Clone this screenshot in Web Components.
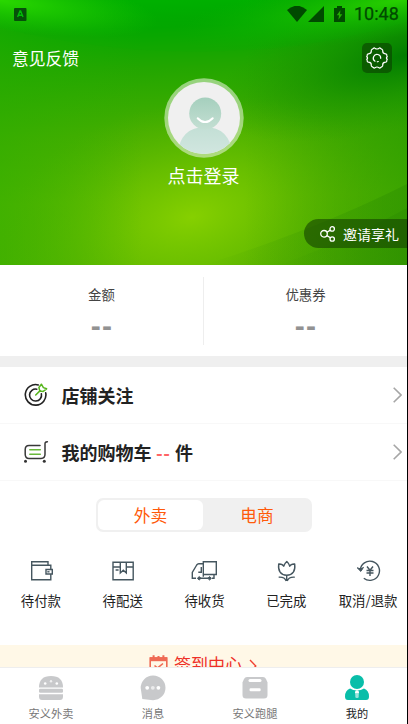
<!DOCTYPE html>
<html lang="zh-CN">
<head>
<meta charset="utf-8">
<title>我的</title>
<style>
html,body{margin:0;padding:0;background:#000}
body{width:408px;height:724px;overflow:hidden;font-family:"Noto Sans CJK SC",sans-serif;color:#222}
</style>
</head>
<body>
<profile-page></profile-page>
<script>
const define=(name,html)=>customElements.define(name,class extends HTMLElement{
  constructor(){
    super();
    this.attachShadow({mode:'open'}).innerHTML=html.replace(/\{(\w+)\}/g,(m,k)=>this.getAttribute(k)||'');
  }
});

const icons={
  gear:[24,24,'<g fill="none" stroke="#fff" stroke-width="1.2" stroke-linejoin="round" stroke-linecap="round"><path d="M8.3 2.5Q9.2 1.5 10 2.2Q12 3.8 14 2.2Q14.8 1.5 15.7 2.5L17.2 3.5Q18 4 17.7 5Q17.5 7.5 20.5 7.8Q22 8 21.8 9.3Q21.7 10.2 22.3 10.7Q20.5 12 22.3 13.3Q21.7 13.8 21.8 14.7Q22 16 20.5 16.2Q17.5 16.5 17.7 19Q18 20 17.2 20.5L15.7 21.5Q14.8 22.5 14 21.8Q12 20.2 10 21.8Q9.2 22.5 8.3 21.5L6.8 20.5Q6 20 6.3 19Q6.5 16.5 3.5 16.2Q2 16 2.2 14.7Q2.3 13.8 1.7 13.3Q3.5 12 1.7 10.7Q2.3 10.2 2.2 9.3Q2 8 3.5 7.8Q6.5 7.5 6.3 5Q6 4 6.8 3.5Z"/><path d="M10 15.2A3.7 3.7 0 1 1 15.7 12.3M12.3 15.8L13.3 15.5"/></g>'],
  share:[16,16,'<g fill="none" stroke="#fff" stroke-width="1.3"><circle cx="4" cy="7.8" r="3.3"/><circle cx="12.2" cy="2.9" r="2.2"/><circle cx="12.2" cy="13" r="2.2"/><path d="M6.9 6.2L10.3 4.1M6.9 9.6L10.4 11.8"/></g>'],
  target:[24,24,'<g fill="none" stroke="#222" stroke-width="1.6" stroke-linecap="round"><path d="M14.3 1.9A10.3 10.3 0 1 0 21.7 9.8"/><path d="M12.8 6.2A6 6 0 1 0 17.4 10.8"/><path stroke="#57b51e" stroke-width="1.5" stroke-linejoin="round" d="M11.7 12L16.2 7.6M17.4 1.2L14.9 4.5L15.8 7.9L19.2 8.4L22.6 5.8L19.4 4.6Z"/></g>'],
  cart:[26,24,'<g fill="none" stroke="#383838" stroke-width="1.5" stroke-linecap="round"><path d="M23.4 1.7C20.6 1.7 21 3.3 21 5.5V14.3Q21 18.4 17 18.4H5Q1.2 18.4 1.2 14.3V9.5Q1.2 5.4 5 5.4H16"/><path stroke="#68b83a" d="M5.8 9.7H16.3M5.8 14.3H16.3"/></g><circle cx="1.5" cy="21.2" r="1.5" fill="#333"/><circle cx="20.3" cy="21.2" r="1.5" fill="#333"/>'],
  wallet:[24,24,'<g fill="none" stroke="#45565f" stroke-width="1.4"><path d="M2.7 6.7V2.7H19V6.2M2.7 6.2H21.8V10M21.8 15.2V20.8H2.7V5.8M17 10.5H23.3V15H17Z"/><path d="M18.3 12.8H20.5"/></g>'],
  package:[24,24,'<g fill="none" stroke="#45565f" stroke-width="1.4"><path d="M2 3.2H22.2V20.8H2ZM2 8H9.3M15.3 8H22.2M9.3 3V14L12.3 11.3L15.3 14V3M4.6 11H7.6"/></g>'],
  truck:[28,24,'<g fill="none" stroke="#45565f" stroke-width="1.4"><path d="M13.3 17.8V2.7H26.3V15.5H13.3M13.3 4.8H8.8Q7.5 4.8 6.7 6L2.3 13.5V19.3H6M10 19.3H18M22 19.3H24V15.5M11.3 8V13.3H8.3"/></g><path d="M9.2 17.6L11 19.3L9.2 21L7.4 19.3ZM19.6 17.6L21.4 19.3L19.6 21L17.8 19.3Z" fill="#45565f" stroke="#45565f"/>'],
  tulip:[24,24,'<g fill="none" stroke="#45565f" stroke-width="1.4" stroke-linejoin="round" transform="translate(.7 0)"><path d="M4 5Q8 4.8 9 7.2Q9.8 4.5 12.1 2.5Q14.4 4.5 15 7.2Q16.2 4.8 20 5Q21.3 15.5 12 16.3Q2.8 15.5 4 5ZM12 16.5V22M4 18.2Q10 17.8 11.5 22M20 18.2Q14 17.8 12.5 22"/></g>'],
  refund:[26,24,'<g transform="translate(1 0)"><g fill="none" stroke="#45565f" stroke-width="1.4"><path d="M4.3 11A9.6 9.6 0 1 1 7.8 19.2"/><path d="M11 7.5L14 11.3L17 7.5M10.5 11.5H17.5M10.5 14H17.5M14 11.3V17"/></g><path d="M1.2 8.8L4.8 12.4L7.5 8.4L4.7 9.9Z" fill="#45565f" stroke="#45565f"/></g>'],
  calendar:[19,19,'<g fill="none" stroke="#ef6a54" stroke-width="1.6"><path d="M1.2 3H17.8V17.8H1.2Z"/><path d="M1 4.2H18" stroke-width="4"/><path d="M4.6 .3V3M9.5 1V3M14.4 .3V3" stroke-width="2"/><path d="M5.5 10.5L8.5 13L14 8.5"/></g>'],
  burger:[24,24,'<g fill="#c8c9cb"><path d="M0 11.5Q0 0 12 0T24 11.5Z"/><rect y="12.8" width="24" height="4" rx="1.2"/><path d="M0 18.3H24V20.5Q24 24 21 24H3Q0 24 0 20.5Z"/></g><g fill="#fff"><circle cx="6.2" cy="7.5" r="1.3"/><circle cx="12" cy="5.2" r="1.2" opacity=".7"/><circle cx="17.8" cy="7.5" r="1.3"/></g>'],
  chat:[26,26,'<path fill="#c8c9cb" d="M.7 13A12.4 12.4 0 1 1 13 25.2L2.3 24Z"/><g fill="#fff"><circle cx="7.2" cy="12.8" r="1.9"/><circle cx="12.8" cy="12.8" r="1.9" opacity=".65"/><circle cx="18.4" cy="12.8" r="1.9"/></g>'],
  box:[26,22,'<path fill="#c8c9cb" d="M5 0H21Q23 0 24 2L25.5 5.5V18Q25.5 21.5 22 21.5H4Q.5 21.5 .5 18V5.5L2 2Q3 0 5 0Z"/><rect x="6.5" y="2" width="13" height="3" rx="1.5" fill="#fff"/><rect x="7.5" y="11.3" width="11.2" height="3" rx="1.2" fill="#fff"/>'],
  user:[24,26,'<g fill="#09bea9"><circle cx="12" cy="7" r="7"/><path d="M5 13.5Q8 15.6 12 15.6T19 13.5Q24 15.3 24 21.5Q24 25 21 25H3Q0 25 0 21.5Q0 15.3 5 13.5Z"/></g><circle cx="12" cy="17.2" r="2" fill="#fff"/><rect x="10.3" y="18" width="3.4" height="5" rx="1.3" fill="#9ce3dc"/>'],
  arrow:[9,16,'<path d="M.7 .8L8 8L.7 15.2" fill="none" stroke="#a6a6a6" stroke-width="1.6"/>'],
  smallarrow:[8,14,'<path d="M1 1L6.8 7L1 13" fill="none" stroke="#f04032" stroke-width="1.4"/>'],
  wifi:[20,16,'<path d="M0 4Q10-4.5 20 4L10 16Z" fill="#004a00"/>'],
  signal:[16,16,'<path d="M16 0V16H0Z" fill="#004a00"/>'],
  battery:[11,16,'<path d="M3 0H8V2H11V16H0V2H3Z" fill="#004a00"/><path d="M6.4 4.2L2.8 9.2H5L4.4 13.7L8.3 8.2H6Z" fill="#25b000"/>'],
  app:[13,13,'<rect width="12.5" height="13" rx="1" fill="#06500a"/><path d="M3.6 9L6 3H6.6L9 9M4.6 7.2H8" fill="none" stroke="#00bd08" stroke-width="1.4"/>']
};
customElements.define('ui-icon',class extends HTMLElement{
  constructor(){
    super();
    const [w,h,art]=icons[this.getAttribute('name')];
    this.attachShadow({mode:'open'}).innerHTML=`<style>:host{display:block;flex:none;width:${w}px;height:${h}px}svg{display:block}</style><svg width="${w}" height="${h}" viewBox="0 0 ${w} ${h}">${art}</svg>`;
  }
});

define('status-bar',`<style>
:host{display:flex;height:28px;box-sizing:border-box;padding:0 10px 0 14px;align-items:center;color:#004a00;font:400 18px/28px Roboto,sans-serif}
ui-icon{margin-right:10px}.app{margin-right:auto}.wifi{margin-right:1px}.bat{margin-right:9px}span{width:43px;-webkit-text-stroke:.25px #004a00}</style>
<ui-icon class="app" name="app"></ui-icon><ui-icon class="wifi" name="wifi"></ui-icon><ui-icon name="signal"></ui-icon><ui-icon class="bat" name="battery"></ui-icon><span>10:48</span>`);

define('user-avatar',`<style>:host{display:block;width:80px;height:80px}svg{display:block}</style>
<svg width="80" height="80" viewBox="0 0 80 80"><defs><clipPath id="c"><circle cx="40" cy="40" r="36"/></clipPath>
<linearGradient id="g" x2="0" y2="1"><stop stop-color="#a5cfbd"/><stop offset="1" stop-color="#c4dfd3"/></linearGradient>
<linearGradient id="b" x2="0" y2="1"><stop stop-color="#c3dfd5"/><stop offset="1" stop-color="#d3e7e1"/></linearGradient></defs>
<circle cx="40" cy="40" r="39.7" fill="#dff0d0" opacity=".6"/><circle cx="40" cy="40" r="36" fill="#f0f0f0"/>
<g clip-path="url(#c)"><path d="M13 80Q15 49 41 49T69 80Z" fill="url(#b)"/><circle cx="41.2" cy="35.5" r="16" fill="url(#g)"/></g>
<path d="M33.7 40.2Q41 48 48.7 40.2" fill="none" stroke="#fff" stroke-width="2" stroke-linecap="round"/></svg>`);

define('hero-backdrop',`<style>:host{display:block;width:407px;height:265px}svg{display:block}</style>
<svg width="407" height="265" viewBox="0 0 407 265"><defs>
<linearGradient id="base" x1=".45" y1="0" x2=".5" y2="1"><stop stop-color="#00b000"/><stop offset=".1" stop-color="#04a600"/><stop offset=".25" stop-color="#22a600"/><stop offset=".5" stop-color="#46ae00"/><stop offset=".75" stop-color="#5ab600"/><stop offset="1" stop-color="#5cb400"/></linearGradient>
<radialGradient id="glow" gradientUnits="userSpaceOnUse" cx="0" cy="0" r="1" gradientTransform="translate(192 217) rotate(-12) scale(200 115)"><stop stop-color="#86d000"/><stop offset=".45" stop-color="#70c300" stop-opacity=".7"/><stop offset="1" stop-color="#58b600" stop-opacity="0"/></radialGradient>
<radialGradient id="tl" gradientUnits="userSpaceOnUse" cx="0" cy="0" r="1" gradientTransform="translate(0 0) rotate(8) scale(160 30)"><stop stop-color="#2ad800"/><stop offset="1" stop-color="#16c800" stop-opacity="0"/></radialGradient>
<radialGradient id="tr" gradientUnits="userSpaceOnUse" cx="0" cy="0" r="1" gradientTransform="translate(400 0) rotate(-9) scale(230 36)"><stop stop-color="#28d000"/><stop offset="1" stop-color="#08b000" stop-opacity="0"/></radialGradient>
<radialGradient id="dark" gradientUnits="userSpaceOnUse" cx="0" cy="0" r="1" gradientTransform="translate(407 55) rotate(-16) scale(200 70)"><stop stop-color="#007c00"/><stop offset=".5" stop-color="#108a00" stop-opacity=".45"/><stop offset="1" stop-color="#209800" stop-opacity="0"/></radialGradient>
<linearGradient id="right"><stop offset=".6" stop-color="#208c00" stop-opacity="0"/><stop offset="1" stop-color="#169000" stop-opacity=".45"/></linearGradient>
<linearGradient id="left"><stop stop-color="#28ad00" stop-opacity=".5"/><stop offset=".35" stop-color="#28ad00" stop-opacity="0"/></linearGradient>
<linearGradient id="fold"><stop stop-color="#318f00" stop-opacity="0"/><stop offset="1" stop-color="#2a8b00" stop-opacity=".4"/></linearGradient>
</defs><path d="M0 0H407V265H0Z" fill="url(#base)"/><path d="M0 0H407V265H0Z" fill="url(#glow)"/><path d="M0 0H407V265H0Z" fill="url(#left)"/><path d="M0 0H407V265H0Z" fill="url(#right)"/><path d="M0 0H407V265H0Z" fill="url(#dark)"/>
<path d="M0 0H407V22Q320 47 245 50Q130 58 0 28Z" fill="#00b500" opacity=".1"/>
<path d="M0 0H407V265H0Z" fill="url(#tl)"/><path d="M0 0H407V265H0Z" fill="url(#tr)"/>
<path d="M204 265Q320 228 407 184V265Z" fill="url(#fold)"/><path d="M278 265Q345 242 407 208V265Z" fill="url(#fold)"/></svg>`);

define('profile-hero',`<style>
:host{display:grid;height:265px;flex:none;color:#fff}
hero-backdrop,.content{grid-area:1/1}
.content{display:flex;flex-direction:column;height:265px}
.top{display:flex;justify-content:space-between;height:30px;margin-top:15px;padding:0 15px 0 12px;font-size:16.8px;line-height:30px}
.settings{display:grid;place-items:center;width:30px;height:30px;border-radius:5px;background:rgba(10,60,0,.58)}
user-avatar{margin:5px 0 0 164px}
.login{text-align:center;font-size:18px;line-height:26px;margin-top:4px}
.invite{display:flex;align-items:center;align-self:flex-end;box-sizing:border-box;width:103px;height:29px;margin-top:31px;padding-left:16px;gap:7px;border-radius:15px 0 0 15px;background:rgba(20,65,0,.6);font-size:14px;line-height:28px}
</style><hero-backdrop></hero-backdrop><div class="content"><status-bar></status-bar>
<div class="top"><span>意见反馈</span><div class="settings"><ui-icon name="gear"></ui-icon></div></div>
<user-avatar></user-avatar><div class="login">点击登录</div><div class="invite"><ui-icon name="share"></ui-icon><span>邀请享礼</span></div></div>`);

define('stat-item',`<style>:host{display:flex;flex-direction:column;align-items:center;flex:1;padding-top:4px;font-size:13.4px;line-height:20px;color:#444}
.v{font:700 30px/30px "Liberation Sans",sans-serif;color:#929292;letter-spacing:1.3px;margin:7px 0 0 1px}</style>
<span><slot></slot></span><span class="v">--</span>`);

define('menu-row',`<style>:host{display:flex;align-items:center;flex:none;box-sizing:border-box;height:57px;padding:0 5px 0 24px;border-bottom:1px solid #f8f8f8;font-weight:700;font-size:18px;line-height:26px;color:#222}
.icon{width:37.5px;flex:none}.label{margin-right:auto}</style>
<div class="icon"><ui-icon name="{icon}"></ui-icon></div><div class="label"><slot></slot></div><ui-icon name="arrow"></ui-icon>`);

define('segment-tabs',`<style>:host{display:flex;flex:none;box-sizing:border-box;width:216px;height:34px;margin:17px 0 0 96px;padding:2px 1px 2px 2px;border-radius:7px;background:#f0f0f0;font-size:16.7px;line-height:30px;color:#ff5a0a;text-align:center}
span{flex:1;border-radius:6px}.on{flex:none;width:105px;background:#fff}</style><span class="on">外卖</span><span>电商</span>`);

define('order-item',`<style>:host{display:flex;flex-direction:column;align-items:center;flex:1;font-size:13.4px;line-height:20px;color:#222;white-space:nowrap}span{margin-top:7px}</style><ui-icon name="{icon}"></ui-icon><span><slot></slot></span>`);

define('nav-item',`<style>:host{display:flex;flex-direction:column;align-items:center;flex:1;font-size:11.2px;line-height:16px}
.i{display:flex;justify-content:center;align-items:center;height:28px;margin-top:6px}span{margin-top:3px}</style><div class="i"><ui-icon name="{icon}"></ui-icon></div><span><slot></slot></span>`);

define('profile-page',`<style>
:host{display:flex;flex-direction:column;width:407px;height:724px;background:#fff;overflow:hidden}
.stats{display:flex;align-items:center;height:91px;flex:none;border-bottom:11px solid #efefef}
.stats hr{width:1px;height:68px;margin:0;border:0;background:#eee}
.red{color:#ff6464;letter-spacing:.7px}
.orders{display:flex;flex:none;width:409px;height:86px;margin-top:27px}
.banner{display:flex;align-items:flex-start;flex:none;height:22px;padding-left:149px;background:#fff8e7;color:#ee3028;font-size:17px;line-height:24px;overflow:hidden}
.banner span{margin:7px 7px 0 6px}.banner .cal{margin-top:10px}.banner .arr{margin-top:14px}
.nav{display:flex;width:408px;height:57px;flex:none;box-sizing:border-box;border-top:1px solid #eee;color:#777;background:#fff}
.active{color:#222}
</style>
<profile-hero></profile-hero>
<div class="stats"><stat-item>金额</stat-item><hr><stat-item>优惠券</stat-item></div>
<menu-row icon="target">店铺关注</menu-row>
<menu-row icon="cart">我的购物车 <span class="red">--</span> 件</menu-row>
<segment-tabs></segment-tabs>
<div class="orders"><order-item icon="wallet">待付款</order-item><order-item icon="package">待配送</order-item><order-item icon="truck">待收货</order-item><order-item icon="tulip">已完成</order-item><order-item icon="refund">取消/退款</order-item></div>
<div class="banner"><ui-icon class="cal" name="calendar"></ui-icon><span>签到中心</span><ui-icon class="arr" name="smallarrow"></ui-icon></div>
<div class="nav"><nav-item icon="burger">安义外卖</nav-item><nav-item icon="chat">消息</nav-item><nav-item icon="box">安义跑腿</nav-item><nav-item class="active" icon="user">我的</nav-item></div>`);

/* The spare dashes in the cart row take their colour from the page. */
const style=document.querySelector('profile-page').shadowRoot.querySelector('.red');
style.style.margin='0 .3px';
</script>
</body>
</html>
